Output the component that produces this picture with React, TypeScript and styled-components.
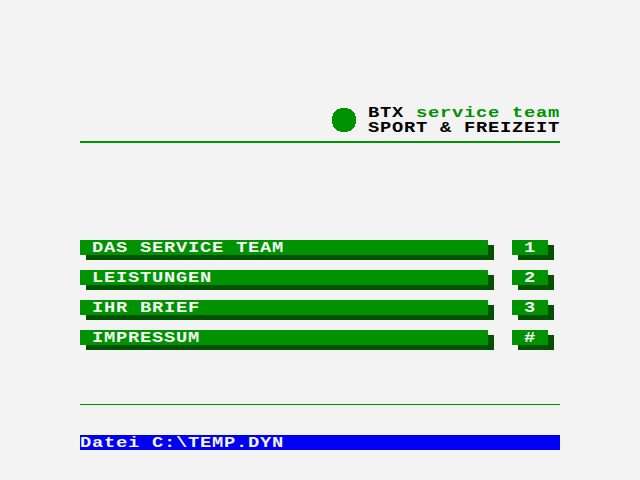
import React from "react";
import styled, { createGlobalStyle } from "styled-components";

const GlobalStyle = createGlobalStyle`
  body { margin: 0; background: #f3f3f3; }
`;

const Screen = styled.main`
  box-sizing: border-box;
  width: 640px;
  height: 480px;
  padding: 105px 80px 0;
  background: #f3f3f3;
  display: flex;
  flex-direction: column;
`;

/* Wide terminal lettering on a 12 x 15 pixel character grid. */
const Text = styled.span<{ $color?: string }>`
  display: block;
  width: max-content;
  height: 15px;
  font: bold 15px/15px "Liberation Mono", monospace;
  letter-spacing: 0.6px;
  white-space: pre;
  color: ${(p) => p.$color ?? "#f3f3f3"};
  transform: translateY(1px) scaleX(1.25);
  transform-origin: left top;
`;

const Accent = styled.span`
  color: #009200;
`;

const Header = styled.header`
  height: 36px;
  padding-left: 252px;
  display: flex;
  gap: 12px;
  border-bottom: 2px solid #009200;
`;

const Logo = styled.svg`
  display: block;
  width: 24px;
  height: 24px;
  margin-top: 3px;
`;

const Title = styled.div`
  width: 192px;
`;

const Menu = styled.nav`
  margin-top: 97px;
  display: flex;
  flex-direction: column;
  gap: 15px;
`;

const Row = styled.div`
  display: flex;
  gap: 24px;
`;

const Bar = styled.div<{ $width: number }>`
  box-sizing: border-box;
  width: ${(p) => p.$width}px;
  height: 15px;
  padding-left: 12px;
  background: #009200;
  box-shadow: 6px 5px 0 #005100;
`;

const Rule = styled.div`
  height: 1px;
  margin-top: 59px;
  background: #009200;
`;

const Status = styled.footer`
  height: 15px;
  margin-top: 30px;
  background: #0000f3;
`;

const entries = [
  { label: "DAS SERVICE TEAM", code: "1" },
  { label: "LEISTUNGEN", code: "2" },
  { label: "IHR BRIEF", code: "3" },
  { label: "IMPRESSUM", code: "#" },
];

export default function App() {
  return (
    <>
      <GlobalStyle />
      <Screen>
        <Header>
          <Logo viewBox="0 0 24 24" shapeRendering="crispEdges">
            <path
              fill="#009200"
              d="M8 0h8v1h3v1h1v1h1v1h1v1h1v3h1v8h-1v3h-1v1h-1v1h-1v1h-1v1h-3v1H8v-1H5v-1H4v-1H3v-1H2v-1H1v-3H0V8h1V5h1V4h1V3h1V2h1V1h3z"
            />
          </Logo>
          <Title>
            <Text $color="#000">
              BTX <Accent>service team</Accent>
            </Text>
            <Text $color="#000">{"SPORT & FREIZEIT"}</Text>
          </Title>
        </Header>
        <Menu>
          {entries.map((entry) => (
            <Row key={entry.code}>
              <Bar $width={408}>
                <Text>{entry.label}</Text>
              </Bar>
              <Bar $width={36}>
                <Text>{entry.code}</Text>
              </Bar>
            </Row>
          ))}
        </Menu>
        <Rule />
        <Status>
          <Text>{"Datei C:\\TEMP.DYN"}</Text>
        </Status>
      </Screen>
    </>
  );
}
